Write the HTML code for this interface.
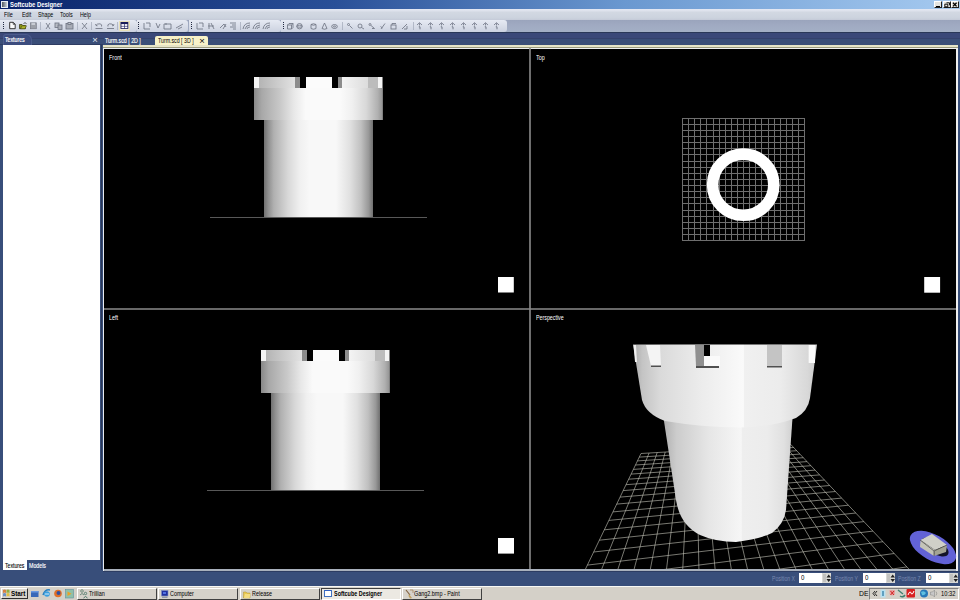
<!DOCTYPE html>
<html><head><meta charset="utf-8">
<style>
*{margin:0;padding:0;box-sizing:border-box}
html,body{width:960px;height:600px;overflow:hidden;background:#384e7a;font-family:"Liberation Sans",sans-serif;position:relative}
.a{position:absolute}
.tx{position:absolute;white-space:nowrap;line-height:1;transform-origin:0 0}
</style></head><body>
<!-- title bar -->
<div class="a" style="left:0;top:0;width:960px;height:9px;background:linear-gradient(90deg,#0a246a 0%,#2a5098 35%,#6a98d0 65%,#a6caf0 100%)"></div>
<div class="a" style="left:1px;top:1px;width:7px;height:7px;background:linear-gradient(90deg,#505860,#c8d0d8);border:1px solid #e8eef4"></div>
<div class="tx" style="left:10px;top:0.6px;font-size:7.6px;color:#fff;font-weight:bold;transform:scaleX(0.78)">Softcube Designer</div>
<div class="a" style="left:934px;top:1px;width:8px;height:7px;background:#e4e4e0;border:1px solid;border-color:#fff #202020 #202020 #fff"></div>
<div class="a" style="left:936px;top:5.5px;width:4px;height:1.2px;background:#000"></div>
<div class="a" style="left:943px;top:1px;width:8px;height:7px;background:#e4e4e0;border:1px solid;border-color:#fff #202020 #202020 #fff"></div>

<div class="a" style="left:951px;top:1px;width:8px;height:7px;background:#e4e4e0;border:1px solid;border-color:#fff #202020 #202020 #fff"></div>

<svg class="a" style="left:925px;top:0" width="35" height="9" viewBox="925 0 35 9"><path d="M946.5 2.8H949.5V5.3M944.8 4.2H947.8V6.8H944.8Z" fill="none" stroke="#000" stroke-width="0.9"/><path d="M953 2.8L956.6 6.4M956.6 2.8L953 6.4" stroke="#000" stroke-width="1.3"/></svg>
<!-- menu -->
<div class="a" style="left:0;top:9px;width:960px;height:11px;background:linear-gradient(#e4e8f4 0,#e0e4ee 12%,#d2d8e2 30%,#ccd3de 80%,#c4cad8 100%)"></div>
<div class="tx" style="left:4px;top:11.9px;font-size:6.3px;color:#000;font-weight:normal;transform:scaleX(0.86)">File</div><div class="tx" style="left:22px;top:11.9px;font-size:6.3px;color:#000;font-weight:normal;transform:scaleX(0.86)">Edit</div><div class="tx" style="left:37.7px;top:11.9px;font-size:6.3px;color:#000;font-weight:normal;transform:scaleX(0.84)">Shape</div><div class="tx" style="left:60.4px;top:11.9px;font-size:6.3px;color:#000;font-weight:normal;transform:scaleX(0.86)">Tools</div><div class="tx" style="left:80px;top:11.9px;font-size:6.3px;color:#000;font-weight:normal;transform:scaleX(0.84)">Help</div>
<!-- toolbar -->
<div class="a" style="left:0;top:19.5px;width:960px;height:13px;background:linear-gradient(#9aa4bc,#a0aac2 40%,#a4b0c6)"></div>
<div class="a" style="left:0;top:20px;width:137px;height:11.5px;background:linear-gradient(#e6eaf3,#ccd2e0);border-radius:0 3px 3px 0"></div>
<div class="a" style="left:137px;top:20px;width:51px;height:11.5px;background:linear-gradient(#e6eaf3,#ccd2e0);border-radius:0 3px 3px 0"></div>
<div class="a" style="left:189px;top:20px;width:92px;height:11.5px;background:linear-gradient(#e6eaf3,#ccd2e0);border-radius:0 3px 3px 0"></div>
<div class="a" style="left:281px;top:20px;width:226px;height:11.5px;background:linear-gradient(#e6eaf3,#ccd2e0);border-radius:0 3px 3px 0"></div>
<div class="a" style="left:118.5px;top:20.5px;width:11.5px;height:10.5px;background:#f2eed8;border:0.6px solid #e8e0b8"></div>
<svg class="a" style="left:0;top:0" width="520" height="34" viewBox="0 0 520 34">
<g fill="#202840"><rect x="3" y="22" width="1" height="1"/><rect x="3" y="24" width="1" height="1"/><rect x="3" y="26" width="1" height="1"/><rect x="3" y="28" width="1" height="1"/>
<rect x="138" y="22" width="1" height="1"/><rect x="138" y="24" width="1" height="1"/><rect x="138" y="26" width="1" height="1"/><rect x="138" y="28" width="1" height="1"/>
<rect x="191" y="22" width="1" height="1"/><rect x="191" y="24" width="1" height="1"/><rect x="191" y="26" width="1" height="1"/><rect x="191" y="28" width="1" height="1"/>
<rect x="283" y="22" width="1" height="1"/><rect x="283" y="24" width="1" height="1"/><rect x="283" y="26" width="1" height="1"/><rect x="283" y="28" width="1" height="1"/></g>
<path d="M9.7 22.3H13.2L15.2 24.3V28.7H9.7Z" fill="#fafafa" stroke="#202020" stroke-width="0.9" stroke-linejoin="miter"/><path d="M13.2 22.3V24.3H15.2" fill="none" stroke="#202020" stroke-width="0.7"/>
<path d="M19.5 24.5H22L23 25.5H25.5V28.7H19.5Z" fill="#8a9418" stroke="#303010" stroke-width="0.7"/><path d="M20.5 28.7L22 25.8H26.5L25 28.7Z" fill="#b0b828" stroke="#303010" stroke-width="0.5"/><path d="M23.5 23.5Q25 22 26.5 23.5" fill="none" stroke="#202020" stroke-width="0.7"/>
<rect x="30.3" y="22.8" width="6" height="6" fill="#9ca0a8" stroke="#707480" stroke-width="0.6"/><rect x="31.5" y="22.8" width="3.5" height="2.2" fill="#c8ccd4"/>
<g stroke="#707684" stroke-width="0.85" fill="none">
</g><path d="M40.5 22V30M77.5 22V30M91.5 22V30M117.5 22V30M240.5 22V30M342.5 22V30M413.5 22V30" stroke="#a0a8b8" stroke-width="0.7"/><g stroke="#707684" stroke-width="0.85" fill="none">
<path d="M46 23L50 29M50 23L46 29"/>
<rect x="55" y="23" width="4" height="4.5" fill="#b8bcc4"/><rect x="58" y="25" width="4" height="4.5" fill="#a8acb6"/>
<rect x="66" y="23.5" width="7" height="5.5" fill="#a8acb6"/><rect x="68" y="22.5" width="3" height="2" fill="#c0c4cc"/>
<path d="M82 23L87 29M87 23L82 29"/>
<path d="M95.5 28.5H102.5M96 25.5Q97 23.5 100 23.8Q102.5 24.5 101.5 26.5M96 25.5L95.5 24M96 25.5L97.5 25.8"/><path d="M107 28.5H114M113.5 25.5Q112.5 23.5 109.5 23.8Q107 24.5 108 26.5M113.5 25.5L114 24M113.5 25.5L112 25.8"/>
<path d="M144 23V29H150M146 23H150V27"/><path d="M156 23L158 28L160 24"/><path d="M164 24H171V29H164ZM166 23V25"/><path d="M176 28L183 24M178 29L182 27"/>
<path d="M197 23V29H203M199 23H203V27"/><path d="M209 23V29M211 23L214 29M208 26H214"/><path d="M220 28L224 24L226 27M223 29L226 24"/><path d="M230 23H236M232 25H236M230 27H236M233 29H236"/>
<path d="M243 29Q244 23 250 23M245 29Q246 25 250 25M247 29Q247 27 250 27"/>
<path d="M253 29Q254 23 260 23M255 29Q256 25 260 25M257 29Q257 27 260 27"/>
<path d="M263 29Q264 23 270 23M265 29Q266 25 270 25M267 29Q267 27 270 27"/>
<path d="M287.5 25H291.5V29H287.5ZM287.5 25L289 23.5H293L291.5 25M293 23.5V27.5L291.5 29"/><circle cx="299.5" cy="26.2" r="2.7"/><ellipse cx="299.5" cy="26.2" rx="2.7" ry="1"/><path d="M311 24.5V28.5Q313.5 30 316 28.5V24.5M311 24.5Q313.5 23 316 24.5Q313.5 26 311 24.5"/><path d="M322 28.5L324.5 23L327 28.5Q324.5 30 322 28.5"/><ellipse cx="334.5" cy="26.5" rx="2.8" ry="2"/><ellipse cx="334.5" cy="26.5" rx="1" ry="0.6"/>
<circle cx="348.5" cy="24.5" r="1"/><path d="M349.5 25.5L352.5 28.5"/><circle cx="360" cy="26" r="2"/><path d="M361.5 27.5L364 29"/><circle cx="370" cy="24.5" r="1"/><path d="M371 25.5L374.5 28.5M372 28.5H374.5"/><path d="M381 29L385 23.5M380.5 26.5L382.5 28"/><rect x="391" y="25" width="5" height="4"/><path d="M392 25V23.5H396"/><path d="M402 29L407 24M404 29H407V26"/>
</g>
<g stroke="#6a7080" stroke-width="0.8" fill="none"><path d="M417 25L419.5 22.7L422 25M419.5 23.2V25.5"/><path d="M418.8 26.8H420V29.3" stroke-width="0.9"/><path d="M428 25L430.5 22.7L433 25M430.5 23.2V25.5"/><path d="M429.8 26.8H431V29.3" stroke-width="0.9"/><path d="M439 25L441.5 22.7L444 25M441.5 23.2V25.5"/><path d="M440.8 26.8H442V29.3" stroke-width="0.9"/><path d="M450 25L452.5 22.7L455 25M452.5 23.2V25.5"/><path d="M451.8 26.8H453V29.3" stroke-width="0.9"/><path d="M461 25L463.5 22.7L466 25M463.5 23.2V25.5"/><path d="M462.8 26.8H464V29.3" stroke-width="0.9"/><path d="M472 25L474.5 22.7L477 25M474.5 23.2V25.5"/><path d="M473.8 26.8H475V29.3" stroke-width="0.9"/><path d="M483 25L485.5 22.7L488 25M485.5 23.2V25.5"/><path d="M484.8 26.8H486V29.3" stroke-width="0.9"/><path d="M494 25L496.5 22.7L499 25M496.5 23.2V25.5"/><path d="M495.8 26.8H497V29.3" stroke-width="0.9"/></g>
<rect x="120.5" y="22" width="7.8" height="6.9" fill="#1a1c58"/><g fill="#fff"><rect x="121.4" y="24.1" width="2.7" height="1.8"/><rect x="124.7" y="24.1" width="2.7" height="1.8"/><rect x="121.4" y="26.5" width="2.7" height="1.6"/><rect x="124.7" y="26.5" width="2.7" height="1.6"/></g>
</svg>
<!-- dock bg -->
<div class="a" style="left:0;top:32px;width:960px;height:1.2px;background:#2a3858"></div><div class="a" style="left:0;top:33px;width:960px;height:4.5px;background:#3a4878"></div><div class="a" style="left:0;top:37.5px;width:960px;height:1px;background:#34426c"></div><div class="a" style="left:0;top:38.5px;width:960px;height:6.5px;background:#3a4e78"></div><div class="a" style="left:0;top:44.2px;width:103px;height:1px;background:#2e3c62"></div><div class="a" style="left:2.5px;top:33.5px;width:29px;height:11px;border:0.8px solid #4c5c8c;border-bottom:none;border-radius:3px 6px 0 0;background:#3c4c7e"></div>
<div class="tx" style="left:5.3px;top:36.8px;font-size:6.5px;color:#fff;transform:scaleX(0.8);-webkit-text-stroke:0.2px #fff">Textures</div>
<div class="tx" style="left:92.3px;top:34.6px;font-size:9.5px;color:#e8ecf6;font-weight:normal;transform:scaleX(1)">×</div>
<div class="a" style="left:3px;top:45px;width:97px;height:515px;background:#fff"></div>
<div class="a" style="left:3px;top:560px;width:24px;height:10px;background:#fff"></div>
<div class="tx" style="left:5px;top:562.5px;font-size:6.6px;color:#000;transform:scaleX(0.78);-webkit-text-stroke:0.1px #000">Textures</div>
<div class="tx" style="left:29px;top:562.5px;font-size:6.6px;color:#fff;transform:scaleX(0.8);-webkit-text-stroke:0.15px #fff">Models</div>
<!-- doc tabs -->
<div class="tx" style="left:105px;top:38px;font-size:6.5px;color:#fff;transform:scaleX(0.81);-webkit-text-stroke:0.15px #fff">Turm.scd [ 2D ]</div>
<div class="a" style="left:155px;top:35.5px;width:53px;height:10px;background:#f8f2c8;border-radius:2px 2px 0 0"></div>
<div class="tx" style="left:158px;top:37.8px;font-size:6.4px;color:#000;font-weight:normal;transform:scaleX(0.82)">Turm.scd [ 3D ]</div>
<div class="tx" style="left:199.3px;top:36px;font-size:9.5px;color:#000;font-weight:normal;transform:scaleX(1)">×</div>
<!-- viewport container -->
<div class="a" style="left:103px;top:45px;width:854.5px;height:525.5px;background:linear-gradient(90deg,#e8ecf0,#f0f0f0)"></div><div class="a" style="left:104px;top:568.8px;width:852px;height:1.8px;background:#a8b0bc"></div><div class="a" style="left:103px;top:570.5px;width:857px;height:1px;background:#2c3c62"></div>
<div class="a" style="left:103px;top:45px;width:854.5px;height:2.5px;background:linear-gradient(#e4e2c4,#eceace)"></div><div class="a" style="left:103px;top:47.3px;width:854.5px;height:0.8px;background:#9c9c80"></div>
<div class="a" style="left:104px;top:49px;width:852px;height:520px;background:#000"></div>
<div class="a" style="left:101px;top:45px;width:1.2px;height:525px;background:#2a3858"></div>
<svg class="a" style="left:0;top:0" width="960" height="600" viewBox="0 0 960 600">
<defs>
<linearGradient id="cyl" x1="0" x2="1" y1="0" y2="0">
<stop offset="0" stop-color="#707070"/><stop offset="0.04" stop-color="#909090"/><stop offset="0.09" stop-color="#b0b0b0"/><stop offset="0.22" stop-color="#d8d8d8"/><stop offset="0.33" stop-color="#f0f0f0"/><stop offset="0.42" stop-color="#f8f8f8"/><stop offset="0.66" stop-color="#f8f8f8"/><stop offset="0.79" stop-color="#e0e0e0"/><stop offset="0.89" stop-color="#c0c0c0"/><stop offset="0.96" stop-color="#989898"/><stop offset="1" stop-color="#707070"/>
</linearGradient>
<linearGradient id="ring" x1="0" x2="1" y1="0" y2="0">
<stop offset="0" stop-color="#888888"/><stop offset="0.06" stop-color="#a8a8a8"/><stop offset="0.2" stop-color="#c8c8c8"/><stop offset="0.31" stop-color="#e8e8e8"/><stop offset="0.4" stop-color="#fafafa"/><stop offset="0.67" stop-color="#fafafa"/><stop offset="0.76" stop-color="#f0f0f0"/><stop offset="0.87" stop-color="#d8d8d8"/><stop offset="0.96" stop-color="#b0b0b0"/><stop offset="1" stop-color="#909090"/>
</linearGradient>
<linearGradient id="up1" x1="0" x2="1"><stop offset="0" stop-color="#b4b4b4"/><stop offset="1" stop-color="#e2e2e2"/></linearGradient>
<linearGradient id="up2" x1="0" x2="1"><stop offset="0" stop-color="#f4f4f4"/><stop offset="1" stop-color="#dcdcdc"/></linearGradient>
<linearGradient id="pbody" x1="663.5" x2="793" y1="0" y2="0" gradientUnits="userSpaceOnUse">
<stop offset="0" stop-color="#b0b0b0"/><stop offset="0.1" stop-color="#cccccc"/><stop offset="0.35" stop-color="#e6e6e6"/><stop offset="0.6" stop-color="#f6f6f6"/><stop offset="0.61" stop-color="#eeeeee"/><stop offset="0.8" stop-color="#ececec"/><stop offset="0.93" stop-color="#e0e0e0"/><stop offset="1" stop-color="#cfcfcf"/>
</linearGradient>
<linearGradient id="pbat" x1="633" x2="817" y1="0" y2="0" gradientUnits="userSpaceOnUse">
<stop offset="0" stop-color="#a8a8a8"/><stop offset="0.05" stop-color="#c4c4c4"/><stop offset="0.15" stop-color="#dadada"/><stop offset="0.37" stop-color="#ececec"/><stop offset="0.6" stop-color="#fafafa"/><stop offset="0.605" stop-color="#f0f0f0"/><stop offset="0.8" stop-color="#ececec"/><stop offset="0.95" stop-color="#d8d8d8"/><stop offset="1" stop-color="#c8c8c8"/>
</linearGradient>
</defs>
<path d="M530 48V569M104 309H956" stroke="#8a8a8a" stroke-width="1.6"/>
<path d="M210 217.5H427M207 490.5H424" stroke="#585858" stroke-width="1"/>
<g transform="translate(254 77)">
<rect x="10" y="42" width="109" height="98" fill="url(#cyl)"/>
<rect x="0" y="11" width="129" height="32" fill="url(#ring)"/>
<rect x="0" y="0" width="5" height="11" fill="#f4f4f4"/>
<rect x="5" y="0" width="36" height="11" fill="url(#up1)"/>
<rect x="41" y="0" width="5" height="11" fill="#8c8c8c"/>
<rect x="46" y="0" width="6" height="11" fill="#000"/>
<rect x="52" y="0" width="26" height="11" fill="#fbfbfb"/>
<rect x="78" y="0" width="6" height="11" fill="#000"/>
<rect x="84" y="0" width="4" height="11" fill="#8c8c8c"/>
<rect x="88" y="0" width="26" height="11" fill="url(#up2)"/>
<rect x="114" y="0" width="10" height="11" fill="#bcbcbc"/>
<rect x="124" y="0" width="4" height="11" fill="#f4f4f4"/>
<rect x="128" y="0" width="1" height="43" fill="#808080"/>
</g>
<g transform="translate(261 350)">
<rect x="10" y="42" width="109" height="98" fill="url(#cyl)"/>
<rect x="0" y="11" width="129" height="32" fill="url(#ring)"/>
<rect x="0" y="0" width="5" height="11" fill="#f4f4f4"/>
<rect x="5" y="0" width="36" height="11" fill="url(#up1)"/>
<rect x="41" y="0" width="5" height="11" fill="#8c8c8c"/>
<rect x="46" y="0" width="6" height="11" fill="#000"/>
<rect x="52" y="0" width="26" height="11" fill="#fbfbfb"/>
<rect x="78" y="0" width="6" height="11" fill="#000"/>
<rect x="84" y="0" width="4" height="11" fill="#8c8c8c"/>
<rect x="88" y="0" width="26" height="11" fill="url(#up2)"/>
<rect x="114" y="0" width="10" height="11" fill="#bcbcbc"/>
<rect x="124" y="0" width="4" height="11" fill="#f4f4f4"/>
<rect x="128" y="0" width="1" height="43" fill="#808080"/>
</g>
<rect x="498" y="277" width="15.8" height="15.5" fill="#fff"/>
<rect x="924.2" y="277" width="15.9" height="15.7" fill="#fff"/>
<rect x="498" y="538" width="16" height="15.6" fill="#fff"/>
<path d="M682.5 118V241M682 118.5H805M688.5 118V241M682 124.5H805M694.5 118V241M682 130.5H805M700.5 118V241M682 136.5H805M706.5 118V241M682 142.5H805M713.5 118V241M682 148.5H805M719.5 118V241M682 154.5H805M725.5 118V241M682 161.5H805M731.5 118V241M682 167.5H805M737.5 118V241M682 173.5H805M743.5 118V241M682 179.5H805M749.5 118V241M682 185.5H805M755.5 118V241M682 191.5H805M761.5 118V241M682 197.5H805M768.5 118V241M682 203.5H805M774.5 118V241M682 210.5H805M780.5 118V241M682 216.5H805M786.5 118V241M682 222.5H805M792.5 118V241M682 228.5H805M798.5 118V241M682 234.5H805M804.5 118V241M682 240.5H805" stroke="#6e6e6e" stroke-width="1" fill="none"/>
<circle cx="743.2" cy="184.7" r="30.6" fill="none" stroke="#fff" stroke-width="11.6"/>
<clipPath id="pclip"><rect x="531" y="310" width="425" height="259"/></clipPath><path d="M641.0 453.5L551.4 640.0M641.0 453.5L790.8 444.5M649.1 453.0L574.2 636.4M639.3 457.1L793.7 447.5M657.2 452.5L596.4 632.9M637.4 460.9L796.7 450.7M665.2 452.0L618.1 629.5M635.5 465.0L799.9 454.1M673.1 451.6L639.3 626.2M633.4 469.4L803.3 457.7M681.0 451.1L659.9 623.0M631.1 474.1L807.0 461.6M688.7 450.6L680.2 619.8M628.7 479.2L810.9 465.7M696.5 450.2L699.9 616.7M626.0 484.7L815.1 470.1M704.1 449.7L719.2 613.7M623.2 490.6L819.6 474.9M711.7 449.3L738.1 610.7M620.1 497.1L824.5 480.0M719.2 448.8L756.6 607.8M616.7 504.1L829.7 485.5M726.6 448.4L774.7 605.0M613.0 511.9L835.4 491.5M734.0 447.9L792.3 602.2M608.9 520.4L841.6 498.1M741.3 447.5L809.6 599.5M604.4 529.8L848.4 505.2M748.6 447.0L826.6 596.8M599.3 540.2L855.8 513.0M755.8 446.6L843.2 594.2M593.7 552.0L863.9 521.6M762.9 446.2L859.4 591.7M587.4 565.1L872.9 531.1M770.0 445.8L875.4 589.2M580.2 580.1L883.0 541.7M777.0 445.3L890.9 586.7M572.0 597.2L894.2 553.5M783.9 444.9L906.2 584.4M562.5 616.9L906.9 566.9M790.8 444.5L921.2 582.0M551.4 640.0L921.2 582.0" stroke="#c8c8bc" stroke-width="0.6" fill="none" clip-path="url(#pclip)"/>
<path d="M663.5 418L676 500Q680 525 700 535Q716 542 736 542Q760 539 772 533Q784 524 786 510L792.5 418Z" fill="url(#pbody)"/>

<path d="M633 344.5H817L810 398Q808 411 796 418Q772 427 741 427.5Q700 427 665 421Q646 414 642 400Z" fill="url(#pbat)"/>
<path d="M633.5 345L636 345L637 362L635 362Z" fill="#f0f0f0"/>
<path d="M646 345H660L661 366H651Z" fill="#f4f4f4"/><path d="M651 365.5H661V367H651Z" fill="#505050"/>
<path d="M695 345H704V366H696Z" fill="#909090"/><path d="M704 345H710V356H704Z" fill="#000"/><path d="M704 356H720V366H704Z" fill="#fafafa"/><path d="M696 366H719V368H696Z" fill="#505050"/>
<path d="M767 345H782V367H767Z" fill="#c4c4c4"/><path d="M767 366H782V367.5H767Z" fill="#505050"/>
<path d="M808.6 345H815.5L815 363H808.6Z" fill="#fafafa"/>
<ellipse cx="933" cy="547.5" rx="25.5" ry="12.8" fill="#6262d6" transform="rotate(29 933 547.5)"/>
<ellipse cx="935" cy="547" rx="15" ry="7" fill="#141428" transform="rotate(29 935 547)"/>
<path d="M920.5 540L932 534L947 545L935 550Z" fill="#d0d0c8"/><path d="M920.5 540L935 550L934 556L920 547Z" fill="#c4c4b8"/><path d="M935 550L947 545L946 552L934 556Z" fill="#a4a494"/>
<path d="M920 540L934 551L947 545M934 551V556" stroke="#303030" stroke-width="0.6" fill="none"/>
</svg>
<div class="tx" style="left:108.8px;top:55.3px;font-size:6.8px;color:#fff;font-weight:normal;transform:scaleX(0.8)">Front</div>
<div class="tx" style="left:535.8px;top:55.3px;font-size:6.8px;color:#fff;font-weight:normal;transform:scaleX(0.8)">Top</div>
<div class="tx" style="left:108.8px;top:315.2px;font-size:6.8px;color:#fff;font-weight:normal;transform:scaleX(0.8)">Left</div>
<div class="tx" style="left:535.8px;top:315.2px;font-size:6.8px;color:#fff;font-weight:normal;transform:scaleX(0.78)">Perspective</div>
<!-- status row -->
<div class="tx" style="left:772px;top:576px;font-size:6.4px;color:#7a8ab0;font-weight:normal;transform:scaleX(0.8)">Position X</div>
<div class="a" style="left:799px;top:573px;width:23px;height:9.5px;background:#fff"></div><div class="tx" style="left:801px;top:574.8px;font-size:6.8px;color:#000;font-weight:normal;transform:scaleX(0.9)">0</div>
<div class="a" style="left:822px;top:573px;width:9px;height:9.5px;background:#d8d8d4"></div>
<div class="tx" style="left:835px;top:576px;font-size:6.4px;color:#7a8ab0;font-weight:normal;transform:scaleX(0.8)">Position Y</div>
<div class="a" style="left:863px;top:573px;width:23px;height:9.5px;background:#fff"></div><div class="tx" style="left:865px;top:574.8px;font-size:6.8px;color:#000;font-weight:normal;transform:scaleX(0.9)">0</div>
<div class="a" style="left:886px;top:573px;width:9px;height:9.5px;background:#d8d8d4"></div>
<div class="tx" style="left:898px;top:576px;font-size:6.4px;color:#7a8ab0;font-weight:normal;transform:scaleX(0.8)">Position Z</div>
<div class="a" style="left:926px;top:573px;width:23px;height:9.5px;background:#fff"></div><div class="tx" style="left:928px;top:574.8px;font-size:6.8px;color:#000;font-weight:normal;transform:scaleX(0.9)">0</div>
<div class="a" style="left:949px;top:573px;width:9px;height:9.5px;background:#d8d8d4"></div>
<svg class="a" style="left:0;top:0" width="960" height="600" viewBox="0 0 960 600">
<g fill="none" stroke="#909090" stroke-width="0.6"><path d="M823 575H826M823 577H826M823 579H826M823 581H826M887 575H890M887 577H890M887 579H890M887 581H890M950 575H953M950 577H953M950 579H953M950 581H953"/></g>
<g fill="#202020"><path d="M826.5 577.5L828.7 574.5L831 577.5ZM826.5 579L828.7 582L831 579Z"/><path d="M890.5 577.5L892.7 574.5L895 577.5ZM890.5 579L892.7 582L895 579Z"/><path d="M953.5 577.5L955.7 574.5L958 577.5ZM953.5 579L955.7 582L958 579Z"/></g>
</svg>
<!-- taskbar -->
<div class="a" style="left:0;top:585.5px;width:960px;height:14.5px;background:#d4d0c8;border-top:1.5px solid #f8f8f4"></div>
<div class="a" style="left:1px;top:587.5px;width:26.5px;height:11.5px;background:#d8d4cc;border:1px solid;border-color:#fff #303030 #303030 #fff"></div>
<svg class="a" style="left:0;top:580px" width="960" height="20" viewBox="0 580 960 20">
<path d="M3 590Q5 589 6 590V593Q4.5 592 3 593Z" fill="#d88040"/><path d="M6.5 590Q8 589 9.5 590V593Q8 592 6.5 593Z" fill="#90b040"/>
<path d="M3 593.5Q4.5 592.5 6 593.5V596.5Q4.5 595.5 3 596.5Z" fill="#7090c0"/><path d="M6.5 593.5Q8 592.5 9.5 593.5V596.5Q8 595.5 6.5 596.5Z" fill="#e0c040"/>
<rect x="31" y="591" width="7.5" height="6" fill="#3868b8"/><rect x="31" y="591" width="7.5" height="1.5" fill="#6898e0"/>
<path d="M43 595Q45 589 50 590" stroke="#2a80c0" stroke-width="1.5" fill="none"/><circle cx="47" cy="594" r="2.8" fill="#3aa0e0"/><path d="M45 594H49" stroke="#fff" stroke-width="0.8"/>
<circle cx="58" cy="593.5" r="3.8" fill="#e07028"/><circle cx="58.5" cy="593" r="2" fill="#3050a0"/>
<rect x="65.5" y="589.5" width="8" height="8.5" fill="#90c0a8" stroke="#6090a0" stroke-width="0.6"/><path d="M67.5 591.5L71.5 593.7L67.5 596Z" fill="#f0a020"/>
</svg>
<div class="tx" style="left:10.6px;top:590.2px;font-size:7.2px;color:#000;font-weight:bold;transform:scaleX(0.88)">Start</div>
<div class="a" style="left:77px;top:587.5px;width:80px;height:12px;background:#d6d2ca;border:1px solid;border-color:#fff #404040 #404040 #fff"></div><svg class="a" style="left:79px;top:589px" width="10" height="10" viewBox="0 0 10 10"><circle cx="3" cy="2" r="1.3" fill="none" stroke="#608070" stroke-width="0.8"/><path d="M1 6Q3 3 5 6" fill="none" stroke="#608070" stroke-width="0.9"/><circle cx="6.5" cy="4.5" r="1.2" fill="none" stroke="#407060" stroke-width="0.8"/><path d="M4.5 9Q6.5 6 8.5 9" fill="none" stroke="#407060" stroke-width="0.9"/></svg><div class="tx" style="left:89px;top:590.6px;font-size:6.8px;color:#000;font-weight:normal;transform:scaleX(0.8)">Trillian</div><div class="a" style="left:158px;top:587.5px;width:80px;height:12px;background:#d6d2ca;border:1px solid;border-color:#fff #404040 #404040 #fff"></div><svg class="a" style="left:161px;top:589.5px" width="9" height="9" viewBox="0 0 9 9"><rect x="0.5" y="0.5" width="6.5" height="5.5" fill="#2030a0" stroke="#8090c0" stroke-width="0.6"/><rect x="2" y="2" width="3" height="2" fill="#5070e0"/><rect x="1" y="6.5" width="5.5" height="1.5" fill="#9098a8"/></svg><div class="tx" style="left:170px;top:590.6px;font-size:6.8px;color:#000;font-weight:normal;transform:scaleX(0.8)">Computer</div><div class="a" style="left:240px;top:587.5px;width:80px;height:12px;background:#d6d2ca;border:1px solid;border-color:#fff #404040 #404040 #fff"></div><svg class="a" style="left:243px;top:589.5px" width="9" height="9" viewBox="0 0 9 9"><path d="M0.5 2H3L4 3H7V8H0.5Z" fill="#e8c850" stroke="#b09030" stroke-width="0.5"/><path d="M1 8L2 4H7.5L6.5 8Z" fill="#f4dc80"/></svg><div class="tx" style="left:252px;top:590.6px;font-size:6.8px;color:#000;font-weight:normal;transform:scaleX(0.8)">Release</div><div class="a" style="left:321px;top:587.5px;width:80px;height:12.5px;background:#ece9e2;border:1px solid;border-color:#404040 #fff #fff #404040"></div><div class="a" style="left:324px;top:590px;width:8px;height:6.5px;border:1px solid #4070c0;border-top:1.5px solid #3060c0;background:#fff"></div><div class="tx" style="left:334px;top:590.6px;font-size:6.8px;color:#000;font-weight:bold;transform:scaleX(0.8)">Softcube Designer</div><div class="a" style="left:402px;top:587.5px;width:80px;height:12px;background:#d6d2ca;border:1px solid;border-color:#fff #404040 #404040 #fff"></div><svg class="a" style="left:405px;top:589px" width="9" height="10" viewBox="0 0 9 10"><path d="M1 1L5 6" stroke="#806040" stroke-width="1.2"/><path d="M4 5L7 9L5 9.5L3.5 7Z" fill="#c0a060"/><path d="M5 1H8V4" fill="none" stroke="#a08050" stroke-width="0.7"/></svg><div class="tx" style="left:414px;top:590.6px;font-size:6.8px;color:#000;font-weight:normal;transform:scaleX(0.8)">Gang2.bmp - Paint</div>
<div class="tx" style="left:858.8px;top:590.2px;font-size:7.2px;color:#000;font-weight:normal;transform:scaleX(0.95)">DE</div>
<div class="a" style="left:868.5px;top:587.5px;width:90px;height:12px;border:1px solid;border-color:#808080 #fff #fff #808080"></div>
<svg class="a" style="left:0;top:580px" width="960" height="20" viewBox="0 580 960 20">
<path d="M875 591L873 593.5L875 596M877 591L875 593.5L877 596" stroke="#000" stroke-width="0.8" fill="none"/>
<rect x="880.5" y="589.5" width="5" height="8" fill="#b8e0f0"/><rect x="882" y="591" width="2" height="5" fill="#60a0c0"/>
<path d="M889.5 590H895V594Q892 597 889.5 594Z" fill="#e8a0a0"/><path d="M890.5 591L894 595M894 591L890.5 595" stroke="#d02020" stroke-width="1"/>
<path d="M898 590L903 594M900 596Q903 598 905 595" stroke="#408070" stroke-width="1.4" fill="none"/>
<rect x="906.5" y="589" width="8.5" height="8.5" fill="#d82020" rx="1"/><path d="M908 595Q910 590 911 593Q912 596 914 591" stroke="#fff" stroke-width="1" fill="none"/>
<circle cx="924" cy="593.5" r="4" fill="#2878b8"/><path d="M921 592Q924 590 926 593Q924 596 922 595" fill="#60c0e0"/>
<path d="M930.5 592H932.5L934.5 590V597L932.5 595H930.5Z" fill="#c8c8c8" stroke="#808080" stroke-width="0.5"/><path d="M936 591.5Q937.5 593.5 936 595.5" stroke="#808080" stroke-width="0.6" fill="none"/>
</svg>
<div class="tx" style="left:941.2px;top:590.4px;font-size:7px;color:#000;font-weight:normal;transform:scaleX(0.82)">10:32</div>
</body></html>
